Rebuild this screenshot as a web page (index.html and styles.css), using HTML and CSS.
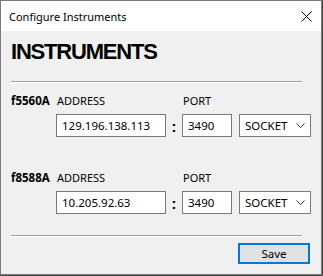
FILE: index.html
```html
<!DOCTYPE html>
<html lang="en">

<head>
  <meta charset="UTF-8">
  <meta name="viewport" content="width=device-width, initial-scale=1.0">
  <title>Configure Instruments</title>
  <link rel="stylesheet" href="styles.css">
</head>

<body>
  <div class="window">
    <div class="titlebar">
      <span class="title">Configure Instruments</span>
      <svg class="close" width="11" height="11" viewBox="0 0 11 11">
        <path d="M0.5 0.5 L10.5 10.5 M10.5 0.5 L0.5 10.5" stroke="#000" stroke-width="1" fill="none"/>
      </svg>
    </div>
    <div class="content">
      <h1 class="heading">INSTRUMENTS</h1>
      <div class="separator"></div>

      <div class="instrument">
        <span class="name">f5560A</span>
        <span class="label">ADDRESS</span>
        <span></span>
        <span class="label">PORT</span>
        <span></span>
        <span></span>
        <span></span>
        <input type="text" class="textbox" value="129.196.138.113">
        <span class="colon">:</span>
        <input type="text" class="textbox" value="3490">
        <span></span>
        <div class="combo">
          <span>SOCKET</span>
          <svg width="9" height="5" viewBox="0 0 9 5"><path d="M0.5 0.5 L4.5 4.5 L8.5 0.5" stroke="#333" stroke-width="1" fill="none"/></svg>
        </div>
      </div>

      <div class="instrument second">
        <span class="name">f8588A</span>
        <span class="label">ADDRESS</span>
        <span></span>
        <span class="label">PORT</span>
        <span></span>
        <span></span>
        <span></span>
        <input type="text" class="textbox" value="10.205.92.63">
        <span class="colon">:</span>
        <input type="text" class="textbox" value="3490">
        <span></span>
        <div class="combo">
          <span>SOCKET</span>
          <svg width="9" height="5" viewBox="0 0 9 5"><path d="M0.5 0.5 L4.5 4.5 L8.5 0.5" stroke="#333" stroke-width="1" fill="none"/></svg>
        </div>
      </div>

      <div class="separator bottom"></div>
      <div class="actions">
        <button class="save">Save</button>
      </div>
    </div>
  </div>
</body>

</html>
```

FILE: styles.css
```css
body {
  margin: 0;
  padding: 0;
  background-color: #4a4a4a;
  font-family: "Noto Sans", Arial, sans-serif;
  color: #000;
}

.window {
  box-sizing: border-box;
  width: 322px;
  height: 275px;
  border: 1px solid #7a7a7a;
  background-color: #f0f0f0;
  display: flex;
  flex-direction: column;
}

.titlebar {
  height: 30px;
  background-color: #fff;
  display: flex;
  align-items: center;
  justify-content: space-between;
  padding: 0 9px 0 8px;
}

.title {
  font-size: 11px;
}

.content {
  padding: 0 10px;
}

.heading {
  margin: 8px 0 0 0;
  font-family: "Liberation Sans", Arial, sans-serif;
  font-size: 22px;
  line-height: 26px;
  font-weight: bold;
  letter-spacing: -1.2px;
}

.separator {
  width: 291px;
  height: 1px;
  margin-top: 16px;
  background-color: #a0a0a0;
  border-bottom: 1px solid #fff;
}

.separator.bottom {
  margin-top: 21px;
}

.instrument {
  display: grid;
  grid-template-columns: 45px 110px 16px 50px 7px 72px;
  grid-template-rows: 16px 23px;
  row-gap: 5px;
  margin-top: 10px;
  font-size: 11px;
}

.instrument.second {
  margin-top: 33px;
}

.name {
  font-weight: bold;
  font-size: 11.5px;
  line-height: 16px;
}

.label {
  line-height: 16px;
  padding-left: 1px;
}

.textbox {
  box-sizing: border-box;
  width: 100%;
  height: 23px;
  margin: 0;
  padding: 0 5px;
  border: 1px solid #7a7a7a;
  background-color: #fff;
  font-family: "Noto Sans", Arial, sans-serif;
  font-size: 11.5px;
  color: #000;
  outline: none;
}

.colon {
  font-family: "Liberation Sans", Arial, sans-serif;
  font-weight: bold;
  font-size: 15px;
  text-align: center;
  line-height: 23px;
  padding-top: 1px;
}

.combo {
  box-sizing: border-box;
  height: 23px;
  border: 1px solid #7a7a7a;
  background-color: #fff;
  display: flex;
  align-items: center;
  justify-content: space-between;
  padding: 0 5px 0 5px;
  font-size: 11.5px;
}

.actions {
  display: flex;
  justify-content: flex-end;
  margin-top: 6px;
  padding-right: 1px;
}

.save {
  box-sizing: border-box;
  width: 72px;
  height: 21px;
  padding: 0;
  border: 2px solid #0078d7;
  background-color: #e1e1e1;
  font-family: "Noto Sans", Arial, sans-serif;
  font-size: 11.5px;
  color: #000;
}
```
